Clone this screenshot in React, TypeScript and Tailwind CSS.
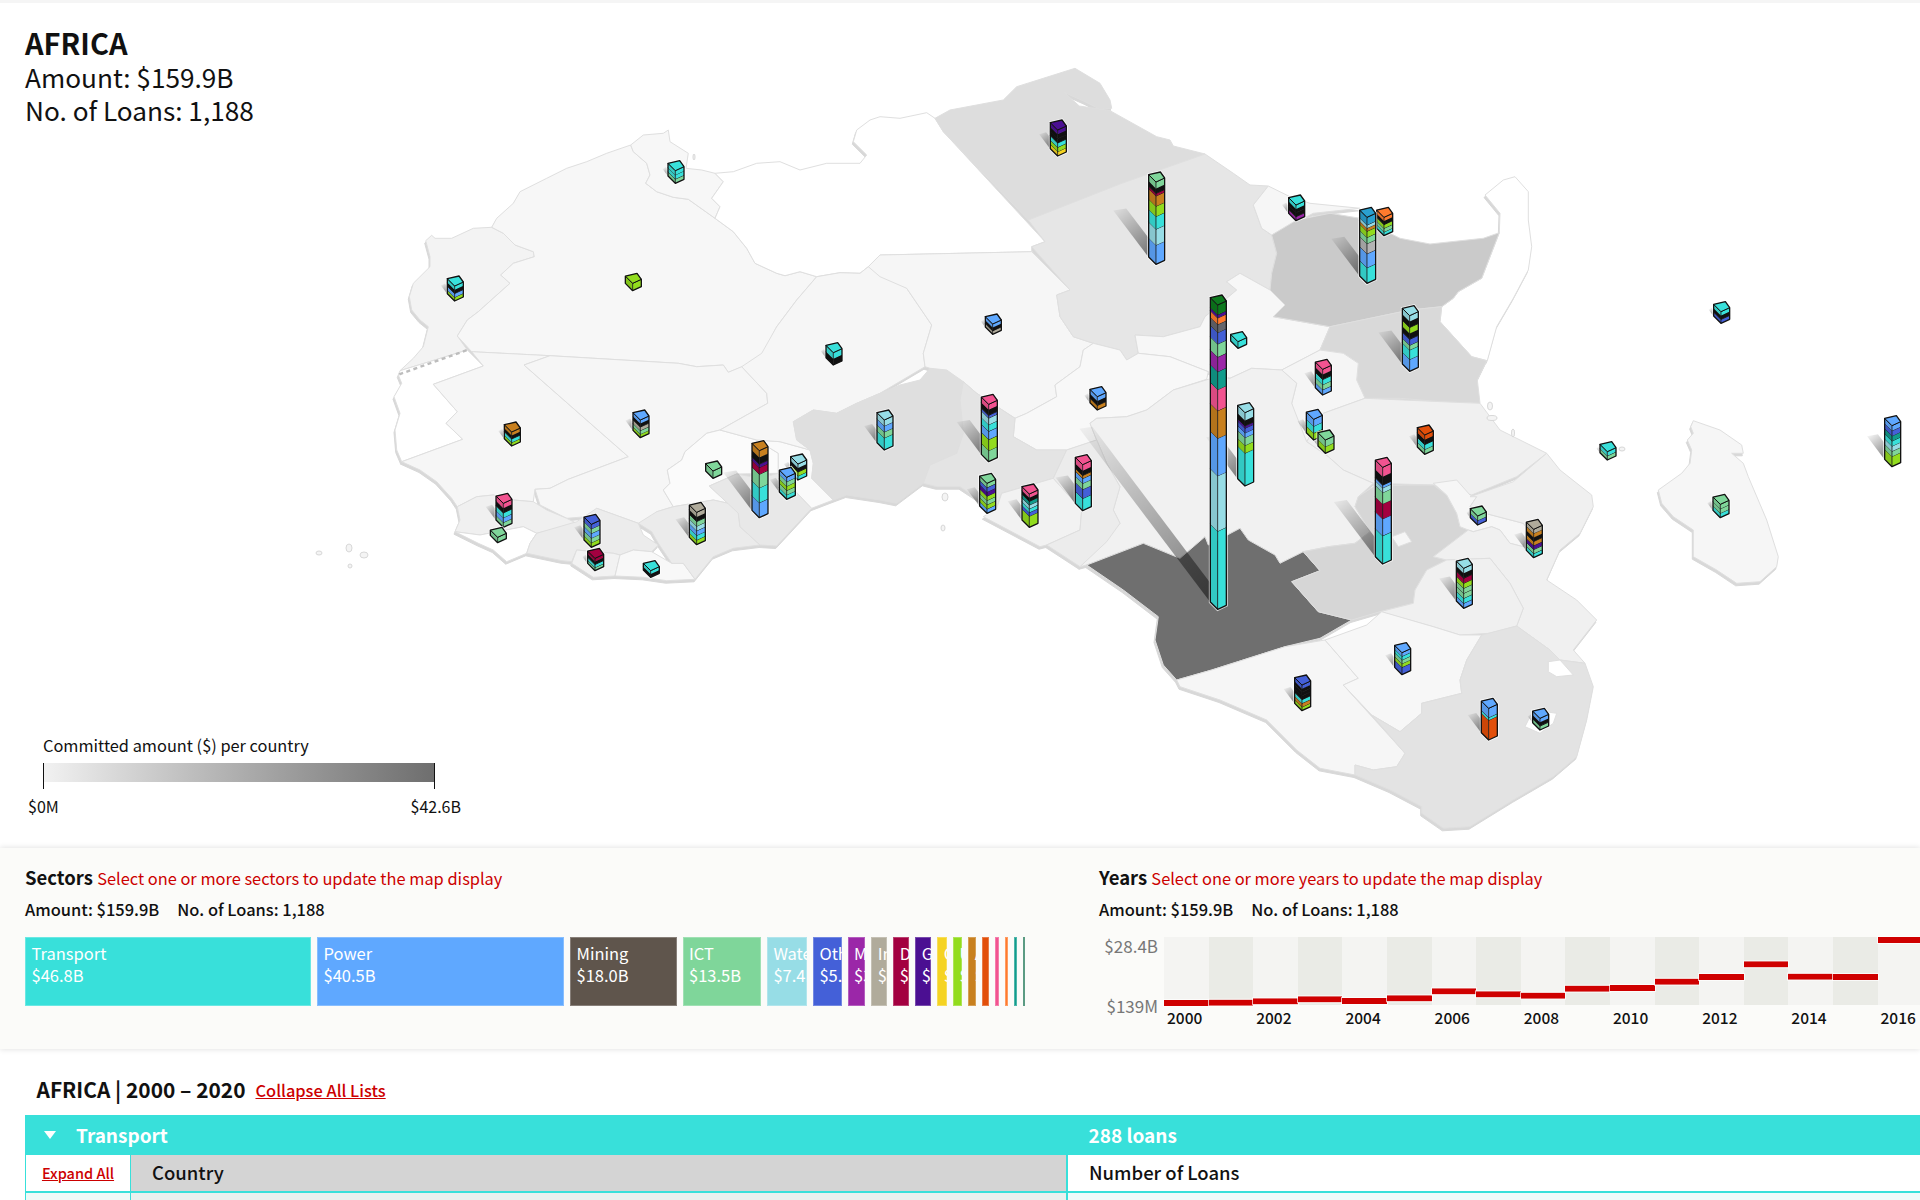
// Painel de empréstimos por região: mapa com colunas empilhadas, setores, anos e lista.
const FONT = "font-['Noto_Sans_CJK_SC','Noto_Sans',sans-serif]"

const OFFSETS: Record<number, [number, number]> = { 9: [380, 120], 10: [880, 60], 11: [1080, 420], 12: [1400, 170] }

// points are read off the 3x crops of the map, so keep them in crop units here
function z(n: number, s: string) {
  const [ox, oy] = OFFSETS[n]
  return s
    .trim()
    .split(/\s+/)
    .map((p) => {
      const [x, y] = p.split(',').map(Number)
      return `${(ox + x / 3).toFixed(1)},${(oy + y / 3).toFixed(1)}`
    })
    .join(' ')
}

const countries: { f: string; p: string }[] = [
  // Morocco
  { f: '#f3f3f3', p: z(9, '137,362 155,346 165,355 215,355 280,325 335,322 370,340 405,375 460,395 463,410 400,430 362,465 390,490 345,530 295,575 262,600 232,648 262,690 60,752 100,715 130,680 145,620 120,600 95,570 88,530 100,490 150,440 150,410') },
  // Algeria
  { f: '#f7f7f7', p: z(9, '232,648 262,600 295,575 345,530 390,490 362,465 400,430 463,410 460,395 405,375 370,340 335,322 350,295 400,250 420,215 500,175 560,145 620,125 680,100 752,75 760,95 800,130 810,165 797,190 830,215 880,232 925,238 1005,295 1060,335 1100,385 1125,430 1190,460 1215,467 1260,455 1310,470 1250,540 1190,620 1150,700 1100,735 1045,757 1030,735 950,740 895,730 510,707 275,695') },
  // Western Sahara
  { f: '#ffffff', p: z(9, '60,752 262,690 310,738 160,793 232,875 198,910 248,958 65,1025 50,990 45,930 60,880 42,830 65,790 55,765') },
  // Tunisia
  { f: '#f7f7f7', p: z(9, '752,75 790,45 850,40 865,30 870,65 925,100 918,145 965,150 1005,160 1030,185 995,235 1020,260 1005,295 925,238 880,232 830,215 797,190 810,165 800,130 760,95') },
  // Libya
  { f: '#ffffff', p: z(9, '1310,470 1260,455 1215,467 1190,460 1125,430 1100,385 1060,335 1005,295 1020,260 995,235 1030,185 1005,160 1060,155 1130,130 1200,125 1260,150 1340,130 1440,130 1460,105 1420,65 1430,30 1470,0') + ' ' + z(10, '0,170 60,175 140,158 165,175 190,215 495,545 455,560 455,575 0,585') + ' ' + z(9, '1465,440 1440,460 1380,458') },
  // Mauritania
  { f: '#f6f6f6', p: z(9, '275,695 510,707 432,735 745,1010 565,1078 510,1105 465,1108 460,1145 400,1140 340,1125 290,1130 232,1160 215,1135 170,1085 120,1050 65,1025 248,958 198,910 232,875 160,793 310,738') },
  // Mali
  { f: '#f6f6f6', p: z(9, '432,735 510,707 895,730 950,740 1030,735 1045,757 1085,740 1160,820 1163,850 1100,885 1020,930 980,940 915,995 905,1020 862,1050 870,1090 850,1110 880,1160 830,1175 790,1215 775,1210 720,1190 650,1165 620,1190 560,1195 480,1155 465,1108 510,1105 565,1078 745,1010') },
  // Senegal
  { f: '#f0f0f0', p: z(9, '232,1160 290,1130 340,1125 400,1140 460,1145 500,1170 560,1195 590,1210 470,1240 430,1220 300,1245 225,1235 240,1200') },
  // Guinea-Bissau + Sierra Leone
  { f: '#ffffff', p: z(9, '225,1235 300,1245 430,1220 470,1240 450,1270 440,1300 380,1325 340,1290 295,1270') },
  // Guinea
  { f: '#ececec', p: z(9, '470,1240 590,1205 650,1165 720,1190 775,1210 790,1245 835,1275 815,1295 760,1290 720,1305 700,1300 590,1290 575,1325 545,1322 440,1300 450,1270') },
  // Liberia
  { f: '#f2f2f2', p: z(9, '590,1290 700,1300 720,1305 705,1368 640,1372 575,1330') },
  // Ivory Coast
  { f: '#f8f8f8', p: z(9, '705,1368 720,1305 760,1290 815,1295 875,1330 910,1330 945,1378 860,1382 790,1372') },
  // Burkina
  { f: '#fbfbfb', p: z(9, '1020,930 980,940 915,995 905,1020 862,1050 870,1090 850,1110 880,1160 1000,1140 1045,1150 1075,1180 988,1098 1070,1062 1195,1060 1195,1000 1130,960') },
  // Ghana band
  { f: '#ebebeb', p: z(9, '775,1210 830,1175 880,1160 1000,1140 1045,1150 1075,1180 1080,1220 1140,1275 1060,1285 1000,1310 945,1378 910,1330 875,1330 835,1270 815,1235') },
  // Togo
  { f: '#e8e8e8', p: z(9, '988,1098 1070,1062 1140,1075 1195,1060 1295,1165 1190,1278 1140,1275 1080,1220 1075,1180') },
  // Benin
  { f: '#fafafa', p: z(9, '1130,960 1200,965 1290,990 1300,1030 1295,1075 1360,1140 1295,1165 1195,1060 1195,1000') },
  // Niger
  { f: '#f6f6f6', p: z(9, '1310,470 1380,458 1440,460 1465,440 1560,490') + ' ' + z(10, '80,685 155,795 130,880 135,920') + ' ' + z(9, '1500,820 1430,850 1370,880 1300,870 1240,905 1250,960 1290,990 1200,965 1130,960 1020,930 1100,885 1163,850 1160,820 1085,740 1145,700 1190,620 1250,540') },
  // Nigeria
  { f: '#dfdfdf', p: z(9, '1240,905 1300,870 1370,880 1430,850 1500,820') + ' ' + z(10, '60,975 120,960 150,925 200,930 250,965 240,1020 250,1120 230,1180 150,1215 130,1270 50,1330 0,1320') + ' ' + z(9, '1400,1125 1360,1140 1295,1075 1300,1030 1290,990 1250,960') },
  // Chad
  { f: '#f6f6f6', p: z(10, '0,585 455,575 570,690 530,705 540,770 580,830 640,850 610,870 600,920 525,975 530,1010 440,1060 405,1075 290,1000 250,965 200,930 150,925 135,920 130,880 155,795 80,685 0,650') + ' ' + z(9, '1465,440') },
  // Egypt
  { f: '#dddddd', p: z(10, '165,175 210,150 370,120 410,80 490,55 585,25 660,70 690,120 695,145 660,148 615,125 552,97 598,138 690,152 830,230 870,240 880,258 975,282 725,370 445,480 190,215') },
  // Sudan
  { f: '#e6e6e6', p: z(10, '445,480 725,370 975,282 1060,340 1110,375 1165,378 1120,435 1145,505 1175,525 1190,580 1175,640 1170,690 1080,640 1040,665 1070,690 975,770 960,800 850,830 765,825 775,880 740,900 720,870 640,850 580,830 540,770 530,705 570,690 455,560 495,545') },
  // South Sudan
  { f: '#f7f7f7', p: z(10, '1080,640 1040,665 1070,690 975,770 960,800 850,830 765,825 775,880 870,890 985,935 1050,955 1115,925 1205,930 1320,870 1350,800 1180,770 1215,735 1170,690') },
  // Eritrea
  { f: '#f6f6f6', p: z(10, '1165,378 1230,410 1290,430 1440,445 1300,460 1175,525 1145,505 1120,435') },
  // Somalia
  { f: '#ffffff', p: z(12, '298,188 300,130 255,75 310,30 345,20 385,65 385,150 395,230 385,300 340,385 290,470 262,572 215,560 120,455 125,410 160,385 175,365 245,325') },
  // Ethiopia
  { f: '#cacaca', p: z(10, '1175,525 1250,480 1350,460 1440,475') + ' ' + z(12, '0,205 90,222 250,205 298,188 245,325 175,365 160,385 125,410 30,420') + ' ' + z(10, '1350,800 1180,770 1215,735 1170,690 1175,640 1190,580') },
  // Kenya
  { f: '#d9d9d9', p: z(12, '125,410 120,455 215,560 260,572 232,630 240,700 125,695 0,685') + ' ' + z(10, '1455,1015 1430,960 1435,910 1390,880 1320,870 1350,800') + ' ' + z(12, '30,420') },
  // Uganda
  { f: '#f5f5f5', p: z(10, '1205,930 1320,870 1390,880 1435,910 1430,960 1455,1015 1330,1060 1280,1145 1250,1100 1235,1030 1250,970') },
  // Tanzania
  { f: '#f0f0f0', p: z(10, '1330,1060 1455,1015') + ' ' + z(12, '125,695 240,700 300,780 440,850 350,920 215,975') + ' ' + z(11, '1060,195 880,190 790,150 745,110') + ' ' + z(10, '1280,1145') },
  // CAR
  { f: '#f8f8f8', p: z(10, '405,1075 440,1060 530,1010 525,975 600,920 610,870 640,850 720,870 740,900 775,880 870,890 985,935 980,958 880,990 800,1050 740,1070 650,1075 630,1090 650,1140 560,1170 470,1170 400,1130') },
  // DRC
  { f: '#f1f1f1', p: z(10, '630,1090 650,1075 740,1070 800,1050 880,990 985,958 1050,955 1115,925 1205,930 1250,970 1235,1030 1270,1120 1280,1145') + ' ' + z(11, '745,110 790,150 880,190 835,230 825,260 870,335 825,370 745,380 670,395 600,430 585,405 505,360 480,325 385,375 375,350 300,415 190,370 20,435 0,440') + ' ' + z(10, '720,1390 700,1350 720,1280 680,1210 650,1140') },
  // Cameroon
  { f: '#e4e4e4', p: z(10, '250,965 290,1000 405,1075 400,1130 470,1170 560,1170 520,1255 365,1300 350,1345 300,1320 240,1280 170,1280 130,1270 150,1215 230,1180 250,1120 240,1020') },
  // Gabon
  { f: '#f2f2f2', p: z(10, '365,1300 520,1255 605,1350 600,1410 500,1455 480,1460 310,1370 350,1345') },
  // Congo
  { f: '#ececec', p: z(10, '520,1255 560,1170 650,1140 680,1210 720,1280 700,1350 720,1390 680,1445 600,1520 500,1455 600,1410 605,1350') },
  // Angola
  { f: '#6f6f6f', p: z(11, '20,435 190,370 300,415 375,350 385,375 480,325 505,360 585,405 600,430 670,395 720,452 635,485 715,575 815,600 720,655 615,680 395,750 290,780 250,735 225,660 235,590 130,510') },
  // Zambia
  { f: '#d6d6d6', p: z(11, '635,485 720,452 670,395 745,380 825,370 870,335 825,260 835,230 880,200 980,195 1060,195 1100,225 1130,280 1140,320 1165,330 1060,410 1100,420 1040,450 1005,510 1000,550 900,575 815,600 715,575') },
  // Malawi
  { f: '#f6f6f6', p: z(11, '1060,190 1130,180 1170,225 1190,230 1170,260 1215,280 1330,310 1345,330 1330,380 1290,370 1260,330 1235,320 1180,335 1165,330 1140,320 1130,280 1100,225') },
  // Mozambique
  { f: '#f0f0f0', p: z(11, '1170,230 1300,185 1400,100 1440,150 1535,225 1540,260 1500,340 1440,390 1400,480 1490,540 1550,600 1480,690 1515,730 1440,720 1410,690 1310,618 1330,565 1290,490 1230,415 1100,420 1060,410 1165,330 1180,335 1235,320 1260,330 1290,370 1330,380 1345,330 1330,310 1215,280 1170,260 1190,230') },
  // Zimbabwe
  { f: '#f0f0f0', p: z(11, '1040,450 1100,420 1230,415 1290,490 1330,565 1310,618 1230,640 1140,645 1060,620 900,575 1000,550 1005,510') },
  // Namibia
  { f: '#f6f6f6', p: z(11, '290,780 395,750 615,680 735,660 835,775 790,795 975,1000 950,1040 880,1050 825,1035 825,1065 720,1045 650,990 560,900 420,840 300,800') },
  // Botswana
  { f: '#f7f7f7', p: z(11, '735,660 860,615 905,575 1060,620 1140,645 1205,645 1160,720 1140,780 1145,820 1025,850 1025,880 960,935 875,885 790,795 835,775') },
  // South Africa
  { f: '#e3e3e3', p: z(11, '825,1035 880,1050 950,1040 975,1000 875,885 960,935 1025,880 1025,850 1145,820 1140,780 1160,720 1205,645 1310,618 1410,690 1440,720 1515,730 1540,800 1520,900 1490,1010 1420,1070 1300,1140 1170,1220 1090,1225 1025,1180 1025,1160 930,1110 825,1065') },
  // Swaziland / Lesotho
  { f: '#ffffff', p: z(11, '1405,725 1440,720 1480,765 1430,770 1405,755') },
  { f: '#ffffff', p: z(11, '1335,920 1360,870 1430,880 1420,910 1380,940') },
  // DRC pedicle
  { f: '#f6f6f6', p: z(11, '935,350 975,335 995,365 955,380') },
  // Madagascar
  { f: '#f6f6f6', p: z(12, '880,752 960,780 1025,825 1030,850 995,850 1030,880 1045,920 1100,1050 1135,1160 1130,1190 1080,1235 1010,1240 950,1200 880,1160 880,1080 820,1040 785,1000 775,960 845,910 870,880 875,840 862,810 880,790 872,770') },
]

const T = '#38e0da'
const P = '#5fa8ff'
const I = '#7fd69a'
const W = '#97dde6'
const O = '#4460d8'
const Mn = '#9b27a8'
const In = '#b0ab9b'
const D = '#a30040'
const G = '#4b0f92'
const Y = '#f5d322'
const L = '#92dc1e'
const Or = '#c8801f'
const R = '#e24f0a'
const Pk = '#f25390'
const Tg = '#ff7a2d'
const Te = '#119c8c'
const Dg = '#0d7a1e'
const K = '#111111'
const Gy = '#66666c'

type Seg = [string, number]
type Mark = { n: number; cx: number; ty: number; by: number; s: (string | Seg)[] }

const marks: Mark[] = [
  { n: 9, cx: 888, ty: 122, by: 190, s: [I, T, T] },
  { n: 9, cx: 226, ty: 468, by: 543, s: [L, P, K, T] },
  { n: 9, cx: 760, ty: 460, by: 512, s: [L] },
  { n: 9, cx: 1362, ty: 668, by: 735, s: [K, T] },
  { n: 9, cx: 397, ty: 906, by: 978, s: [L, T, K, Or] },
  { n: 9, cx: 783, ty: 870, by: 953, s: [L, I, In, K, P] },
  { n: 9, cx: 372, ty: 1120, by: 1222, s: [I, P, T, K, Pk] },
  { n: 9, cx: 355, ty: 1222, by: 1268, s: [I] },
  { n: 9, cx: 636, ty: 1183, by: 1282, s: [L, I, P, I, O] },
  { n: 9, cx: 647, ty: 1285, by: 1352, s: [I, T, K, D] },
  { n: 9, cx: 814, ty: 1322, by: 1372, s: [K, T] },
  { n: 9, cx: 952, ty: 1147, by: 1274, s: [L, T, P, W, I, K, In] },
  { n: 9, cx: 1140, ty: 962, by: 1193, s: [[P, 2.2], [T, 2.2], [I, 2], [D, 1], [G, 0.5], [K, 1], [Or, 1]] },
  { n: 9, cx: 1001, ty: 1023, by: 1075, s: [I] },
  { n: 9, cx: 1256, ty: 1002, by: 1080, s: [T, L, K, W] },
  { n: 9, cx: 1222, ty: 1042, by: 1138, s: [T, I, L, I, P] },
  { n: 9, cx: 1515, ty: 870, by: 990, s: [[T, 2], I, P, W] },
  { n: 10, cx: 535, ty: 180, by: 288, s: [Y, L, T, K, K, G] },
  { n: 10, cx: 830, ty: 336, by: 613, s: [[P, 3], [W, 2.5], [T, 2], [L, 1.6], [Or, 1.6], [D, 0.4], [K, 0.8], [I, 1]] },
  { n: 10, cx: 340, ty: 762, by: 823, s: [In, K, P] },
  { n: 10, cx: 654, ty: 980, by: 1050, s: [Or, K, P] },
  { n: 10, cx: 328, ty: 1003, by: 1205, s: [[I, 2], [L, 2], [P, 1.5], [T, 1.2], [W, 1.2], [O, 0.5], [K, 1], [Pk, 1]] },
  { n: 10, cx: 323, ty: 1240, by: 1360, s: [P, L, I, L, G, O, I] },
  { n: 10, cx: 450, ty: 1272, by: 1402, s: [[L, 3], O, T, W, Te, K, Pk] },
  { n: 10, cx: 610, ty: 1184, by: 1352, s: [[T, 2], [O, 1.5], [I, 1], [P, 0.8], [Or, 0.5], [K, 0.8], [Pk, 1]] },
  { n: 10, cx: 1015, ty: 705, by: 1648, s: [[T, 24], [W, 17], [P, 11.5], [Or, 8.5], [Pk, 6.5], [Te, 5.5], [Mn, 4.5], [I, 4], [O, 3.5], [Gy, 2.5], [Tg, 2], [G, 1], [Dg, 3]] },
  { n: 10, cx: 1097, ty: 1028, by: 1278, s: [[T, 4.2], L, I, [P, 0.6], [O, 0.6], [G, 0.3], [K, 0.7], W] },
  { n: 10, cx: 1076, ty: 815, by: 865, s: [T] },
  { n: 10, cx: 1250, ty: 405, by: 482, s: [Mn, K, K, T] },
  { n: 10, cx: 1463, ty: 442, by: 670, s: [[T, 2], [P, 1.8], ['#b4b4b4', 1.3], [I, 0.8], [L, 0.8], [Or, 0.4], [W, 0.4], ['#2aa0d0', 1]] },
  { n: 10, cx: 1514, ty: 442, by: 527, s: [T, I, L, K, Tg] },
  { n: 10, cx: 1330, ty: 898, by: 1005, s: [P, I, T, K, Pk] },
  { n: 10, cx: 1303, ty: 1048, by: 1140, s: [L, T, P] },
  { n: 10, cx: 1338, ty: 1110, by: 1180, s: [L, I] },
  { n: 11, cx: 910, ty: 112, by: 432, s: [[T, 3], [P, 1.8], [D, 1.6], [I, 1.2], [W, 0.5], [P, 0.3], [K, 0.9], [Pk, 1]] },
  { n: 11, cx: 1036, ty: 15, by: 103, s: [I, T, K, R] },
  { n: 11, cx: 1195, ty: 258, by: 315, s: [O, I] },
  { n: 11, cx: 1363, ty: 298, by: 413, s: [T, I, G, Or, K, Or, In] },
  { n: 11, cx: 1153, ty: 415, by: 565, s: [P, T, I, I, L, D, K, W] },
  { n: 11, cx: 968, ty: 668, by: 764, s: [[O, 2], L, I, T, P] },
  { n: 11, cx: 668, ty: 765, by: 872, s: [L, Or, T, K, K, K, O] },
  { n: 11, cx: 1228, ty: 835, by: 960, s: [[R, 3], [T, 0.4], [P, 1.4]] },
  { n: 11, cx: 1382, ty: 865, by: 930, s: [I, K, P] },
  { n: 12, cx: 965, ty: 395, by: 460, s: [O, K, T] },
  { n: 12, cx: 624, ty: 815, by: 870, s: [I, T] },
  { n: 12, cx: 963, ty: 973, by: 1043, s: [T, I, I] },
  { n: 12, cx: 1478, ty: 737, by: 890, s: [[L, 2], I, W, T, Te, O, P] },
  { n: 12, cx: 31, ty: 407, by: 604, s: [[P, 2], [T, 1.6], [I, 0.8], O, K, L, K, W] },
]

function box(m: Mark) {
  const [ox, oy] = OFFSETS[m.n]
  const cx = ox + m.cx / 3
  const ty = oy + m.ty / 3
  const by = oy + m.by / 3
  return { cx, ty, by, H: by - (ty + 10), left: cx - 8 }
}

function Shadow({ m, i }: { m: Mark; i: number }) {
  const { by, H, left } = box(m)
  if (H < 8) return null
  const y0 = by - 7
  const dx = 0.43 * H
  const dy = 0.57 * H
  const tip = y0 - dy
  // faixa estreita que sai da base e some para cima à esquerda
  const w = Math.min(13, dx * 0.62)
  const riseY = tip - 2 + (dx - w) * (0.57 / 0.43)
  const pts = [`${left},${y0}`, `${left},${riseY}`, `${left - dx + w},${tip - 2}`, `${left - dx},${tip}`].join(' ')
  return (
    <>
      <linearGradient id={`sh${i}`} gradientUnits="userSpaceOnUse" x1={left} y1={y0} x2={left - dx} y2={tip}>
        <stop offset="0" stopColor="#000" stopOpacity={0.5} />
        <stop offset="1" stopColor="#000" stopOpacity={0.04} />
      </linearGradient>
      <polygon points={pts} fill={`url(#sh${i})`} />
    </>
  )
}

function Stack({ m }: { m: Mark }) {
  const { cx, ty, by, H } = box(m)
  const lx = cx - 8
  const rx = cx + 8
  const fx = cx - 0.7
  const tx = cx + 3.7
  const ly = ty + 2.7
  const ry = ty + 6
  const fy = ty + 10
  const segs: Seg[] = m.s.map((s) => (typeof s === 'string' ? [s, 1] : s))
  const sum = segs.reduce((a, s) => a + s[1], 0)
  let acc = 0
  const outline = `${lx},${ly} ${tx},${ty} ${rx},${ry} ${rx},${by - 4} ${fx},${by} ${lx},${by - 7.3}`
  return (
    <g>
      <polygon points={outline} fill="none" stroke="#fff" strokeOpacity={0.7} strokeWidth={3} />
      {segs.map(([c, w], i) => {
        const d0 = H - acc
        acc += (w / sum) * H
        const d1 = H - acc
        const last = i === segs.length - 1
        return (
          <g key={i}>
            <polygon points={`${lx},${ly + d1} ${fx},${fy + d1} ${fx},${fy + d0} ${lx},${ly + d0}`} fill={c} />
            <polygon points={`${lx},${ly + d1} ${fx},${fy + d1} ${fx},${fy + d0} ${lx},${ly + d0}`} fill="#000" fillOpacity={0.1} />
            <polygon points={`${fx},${fy + d1} ${rx},${ry + d1} ${rx},${ry + d0} ${fx},${fy + d0}`} fill={c} />
            <polyline points={`${lx},${ly + d1} ${fx},${fy + d1} ${rx},${ry + d1}`} fill="none" stroke="#111" strokeWidth={0.9} />
            {!last && d1 > 0 ? (
              <polyline points={`${lx},${ly + d1} ${tx},${ty + d1} ${rx},${ry + d1}`} fill="none" stroke="#000" strokeOpacity={0.2} strokeWidth={0.7} />
            ) : null}
            {last ? <polygon points={`${lx},${ly} ${tx},${ty} ${rx},${ry} ${fx},${fy}`} fill={c} /> : null}
          </g>
        )
      })}
      <line x1={fx} y1={fy} x2={fx} y2={by} stroke="#111" strokeWidth={0.8} />
      <polyline points={`${lx},${ly} ${fx},${fy} ${rx},${ry}`} fill="none" stroke="#111" strokeWidth={1} />
      <polygon points={outline} fill="none" stroke="#111" strokeWidth={1.3} strokeLinejoin="round" />
    </g>
  )
}

function AfricaMap() {
  const order = [...marks].sort((a, b) => box(a).by - box(b).by)
  return (
    <svg width={1920} height={848} viewBox="0 0 1920 848" className="block">
      <g transform="translate(-1 2.5)">
        {countries.map((c, i) => (
          <polygon key={i} points={c.p} fill="#d8d8d8" stroke="#d8d8d8" strokeWidth={1} />
        ))}
      </g>
      {countries.map((c, i) => (
        <polygon key={i} points={c.p} fill={c.f} stroke="#dfdfdf" strokeWidth={1} strokeLinejoin="round" />
      ))}
      <polyline points={z(9, '58,763 262,690')} fill="none" stroke="#bdbdbd" strokeWidth={2.4} strokeDasharray="4 3.5" />
      {/* ilhas */}
      <g fill="#f4f4f4" stroke="#d8d8d8" strokeWidth={1}>
        <ellipse cx={319} cy={553} rx={3} ry={2} />
        <ellipse cx={349} cy={548} rx={3} ry={4} />
        <ellipse cx={364} cy={555} rx={4} ry={3} />
        <ellipse cx={350} cy={566} rx={2} ry={2} />
        <ellipse cx={945} cy={497} rx={3} ry={4} />
        <ellipse cx={943} cy={528} rx={2} ry={3} />
        <ellipse cx={1490} cy={406} rx={2.5} ry={4} />
        <ellipse cx={1492} cy={418} rx={5} ry={2.5} />
        <ellipse cx={1513} cy={433} rx={1.5} ry={4} />
        <ellipse cx={1622} cy={449} rx={3} ry={2} />
        <ellipse cx={694} cy={157} rx={1} ry={3} />
      </g>
      {order.map((m, i) => (
        <Shadow key={i} m={m} i={i} />
      ))}
      {order.map((m, i) => (
        <Stack key={i} m={m} />
      ))}
    </svg>
  )
}

const sectors = [
  { nome: 'Transport', valor: '$46.8B', w: 286, c: 'bg-[#38e0da]' },
  { nome: 'Power', valor: '$40.5B', w: 247, c: 'bg-[#5fa8ff]' },
  { nome: 'Mining', valor: '$18.0B', w: 106.5, c: 'bg-[#5f554c]' },
  { nome: 'ICT', valor: '$13.5B', w: 78.4, c: 'bg-[#7fd69a]' },
  { nome: 'Water', valor: '$7.4B', w: 40, c: 'bg-[#97dde6]' },
  { nome: 'Other', valor: '$5.3B', w: 28.7, c: 'bg-[#4460d8]' },
  { nome: 'Metals', valor: '$3.5B', w: 17.7, c: 'bg-[#9b27a8]' },
  { nome: 'Industry', valor: '$3.1B', w: 16, c: 'bg-[#b0ab9b]' },
  { nome: 'Debt', valor: '$2.9B', w: 16, c: 'bg-[#a30040]' },
  { nome: 'Gas', valor: '$2.8B', w: 16, c: 'bg-[#4b0f92]' },
  { nome: 'Oil', valor: '$1.9B', w: 9.7, c: 'bg-[#f5d322]' },
  { nome: 'Urban', valor: '$1.8B', w: 9.3, c: 'bg-[#92dc1e]' },
  { nome: 'Agri', valor: '$1.4B', w: 8, c: 'bg-[#c8801f]' },
  { nome: 'Edu', valor: '$1.2B', w: 7, c: 'bg-[#e24f0a]' },
  { nome: 'Health', valor: '$0.9B', w: 4, c: 'bg-[#f25390]' },
  { nome: 'Tourism', valor: '$0.7B', w: 3, c: 'bg-[#ff7a2d]' },
  { nome: 'Finance', valor: '$0.5B', w: 3, c: 'bg-[#119c8c]' },
  { nome: 'Social', valor: '$0.3B', w: 2, c: 'bg-[#257a5a]' },
]

// centro da barra de cada ano, em px a partir do topo do gráfico
const years = [
  { ano: 2000, y: 66 },
  { ano: 2001, y: 65.7 },
  { ano: 2002, y: 64.3 },
  { ano: 2003, y: 62.3 },
  { ano: 2004, y: 64 },
  { ano: 2005, y: 61.3 },
  { ano: 2006, y: 54.3 },
  { ano: 2007, y: 57.3 },
  { ano: 2008, y: 58.7 },
  { ano: 2009, y: 51.7 },
  { ano: 2010, y: 51 },
  { ano: 2011, y: 44.7 },
  { ano: 2012, y: 40 },
  { ano: 2013, y: 27.3 },
  { ano: 2014, y: 39.7 },
  { ano: 2015, y: 40 },
  { ano: 2016, y: 3 },
]

function YearsChart() {
  return (
    <div className="mt-[18px] -ml-[1px] flex">
      <div className="flex h-[68px] w-[66px] flex-col justify-between pr-[6px] text-right text-[17px] leading-[18px] text-[#777]">
        <span>$28.4B</span>
        <span className="mb-[-10px]">$139M</span>
      </div>
      <div className="flex">
        {years.map((a, i) => (
          <div key={a.ano} className="w-[44.6px] shrink-0">
            <div className={`h-[68px] ${i % 2 === 0 || a.ano === 2016 ? 'bg-[#f4f4f2]' : 'bg-[#eaebe6]'}`}>
              <div className="h-[6px] bg-[#cf0000] outline outline-1 outline-white/70" style={{ transform: `translateY(${a.y - 3}px)` }} />
            </div>
            <div className="mt-[2px] h-[20px] w-[89px] pl-[3px] text-[15.5px] leading-[20px] font-medium text-[#111]">{i % 2 === 0 ? a.ano : ''}</div>
          </div>
        ))}
      </div>
    </div>
  )
}

function Resumo() {
  return (
    <p className="mt-[10px] flex gap-[18px] text-[16.45px] leading-[20px] font-medium text-[#111]">
      <span>Amount: $159.9B</span>
      <span>No. of Loans: 1,188</span>
    </p>
  )
}

export default function App() {
  return (
    <div className={`${FONT} relative h-[1200px] w-[1920px] overflow-hidden bg-white`}>
      <div className="h-[3px] bg-[#f5f5f5]" />
      <section className="relative -mt-[3px] h-[848px]">
        <AfricaMap />
        <div className="absolute top-[24px] left-[25px] text-[#111]">
          <h1 className="text-[29px] leading-[37px] font-bold">AFRICA</h1>
          <p className="text-[26.2px] leading-[33px]">Amount: $159.9B</p>
          <p className="text-[26.2px] leading-[33px]">No. of Loans: 1,188</p>
        </div>
        <div className="absolute top-[735px] left-[28px] w-[440px]">
          <p className="pl-[15px] text-[16.35px] leading-[20px] text-[#111]">Committed amount ($) per country</p>
          <div className="relative mt-[8px] ml-[15px] h-[19px] w-[392px] bg-gradient-to-r from-[#f2f2f2] to-[#6e6e6e]">
            <span className="absolute top-0 left-0 h-[26px] w-px bg-[#111]" />
            <span className="absolute top-0 right-0 h-[26px] w-px bg-[#111]" />
          </div>
          <div className="mt-[14px] flex w-[433px] justify-between text-[16px] leading-[20px] text-[#111]">
            <span>$0M</span>
            <span>$42.6B</span>
          </div>
        </div>
      </section>

      <section className="relative flex h-[201px] bg-[#fbfbf9] shadow-[0_0_6px_rgba(0,0,0,0.14)]">
        <div className="w-[1098px] shrink-0 pt-[18px] pl-[25px]">
          <h2 className="text-[18.5px] leading-[22px] font-bold text-[#111]">
            Sectors <span className="text-[16.4px] font-normal text-[#cc0000]">Select one or more sectors to update the map display</span>
          </h2>
          <Resumo />
          <div className="mt-[18px] flex gap-[6px]">
            {sectors.map((s) => (
              <div
                key={s.nome}
                className={`${s.c} h-[69px] shrink-0 overflow-hidden shadow-[inset_0_0_0_1px_rgba(255,255,255,0.25)]`}
                style={{ width: s.w }}
              >
                <div className="pt-[5px] pl-[6.5px] text-[16.5px] leading-[22px] whitespace-nowrap text-white">
                  <div>{s.nome}</div>
                  <div>{s.valor}</div>
                </div>
              </div>
            ))}
          </div>
        </div>
        <div className="flex-1 pt-[18px] pl-[1px]">
          <h2 className="text-[18.5px] leading-[22px] font-bold text-[#111]">
            Years <span className="text-[16.4px] font-normal text-[#cc0000]">Select one or more years to update the map display</span>
          </h2>
          <Resumo />
          <YearsChart />
        </div>
      </section>

      <section className="pl-[25px]">
        <h2 className="flex h-[66px] items-end pb-[12px] pl-[11.5px] text-[#111]">
          <span className="text-[20.9px] leading-[28px] font-semibold">AFRICA | 2000 – 2020</span>
          <a className="ml-[10px] text-[16.4px] leading-[26px] font-medium text-[#cc0000] underline">Collapse All Lists</a>
        </h2>
        <div className="flex h-[40px] items-center bg-[#38e0da] text-white">
          <span className="ml-[19px] h-0 w-0 border-x-[6px] border-t-[8px] border-x-transparent border-t-white" />
          <span className="ml-[20px] w-[1012.5px] text-[19px] font-semibold">Transport</span>
          <span className="text-[19px] font-semibold">288 loans</span>
        </div>
        <div className="flex h-[38px] items-stretch border-b-2 border-[#38e0da]">
          <div className="flex w-[106px] items-center justify-center border-x border-[#38e0da] text-[14.5px] font-medium text-[#cc0000] underline">Expand All</div>
          <div className="flex w-[935px] items-center bg-[#d4d4d4] pl-[21px] text-[18.5px] font-medium text-[#111]">Country</div>
          <div className="flex flex-1 items-center border-l-2 border-[#38e0da] pl-[21px] text-[18.5px] font-medium text-[#111]">Number of Loans</div>
        </div>
        <div className="flex h-[10px]">
          <div className="w-[106px] border-x border-[#38e0da] bg-[#eefaf8]" />
          <div className="w-[935px] bg-[#e9f1ef]" />
          <div className="flex-1 border-l-2 border-[#38e0da] bg-[#effbfa]" />
        </div>
      </section>
    </div>
  )
}
